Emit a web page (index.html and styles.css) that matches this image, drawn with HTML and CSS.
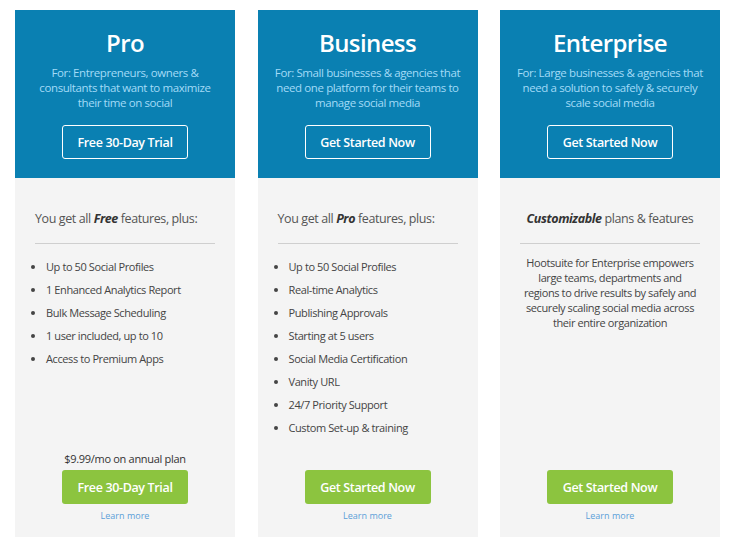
FILE: index.html
```html
<!DOCTYPE html>
<html lang="en">
<head>
<meta charset="utf-8">
<title>Plans</title>
<link rel="stylesheet" href="styles.css">
</head>
<body>
<div class="plans">
  <div class="plan">
    <div class="plan-head">
      <h2 class="plan-title">Pro</h2>
      <p class="plan-for">For: Entrepreneurs, owners &amp;<br>consultants that want to maximize<br>their time on social</p>
      <a class="btn btn-outline">Free 30-Day Trial</a>
    </div>
    <div class="plan-body">
      <p class="plan-intro">You get all <em>Free</em> features, plus:</p>
      <hr class="divider">
      <ul class="features">
        <li>Up to 50 Social Profiles</li>
        <li>1 Enhanced Analytics Report</li>
        <li>Bulk Message Scheduling</li>
        <li>1 user included, up to 10</li>
        <li>Access to Premium Apps</li>
      </ul>
      <div class="plan-foot">
        <p class="price">$9.99/mo on annual plan</p>
        <a class="btn btn-green">Free 30-Day Trial</a>
        <a class="learn">Learn more</a>
      </div>
    </div>
  </div>
  <div class="plan">
    <div class="plan-head">
      <h2 class="plan-title">Business</h2>
      <p class="plan-for">For: Small businesses &amp; agencies that<br>need one platform for their teams to<br>manage social media</p>
      <a class="btn btn-outline">Get Started Now</a>
    </div>
    <div class="plan-body">
      <p class="plan-intro">You get all <em>Pro</em> features, plus:</p>
      <hr class="divider">
      <ul class="features">
        <li>Up to 50 Social Profiles</li>
        <li>Real-time Analytics</li>
        <li>Publishing Approvals</li>
        <li>Starting at 5 users</li>
        <li>Social Media Certification</li>
        <li>Vanity URL</li>
        <li>24/7 Priority Support</li>
        <li>Custom Set-up &amp; training</li>
      </ul>
      <div class="plan-foot">
        <a class="btn btn-green">Get Started Now</a>
        <a class="learn">Learn more</a>
      </div>
    </div>
  </div>
  <div class="plan">
    <div class="plan-head">
      <h2 class="plan-title">Enterprise</h2>
      <p class="plan-for">For: Large businesses &amp; agencies that<br>need a solution to safely &amp; securely<br>scale social media</p>
      <a class="btn btn-outline">Get Started Now</a>
    </div>
    <div class="plan-body">
      <p class="plan-intro center"><em>Customizable</em> plans &amp; features</p>
      <hr class="divider">
      <p class="plan-desc">Hootsuite for Enterprise empowers<br>large teams, departments and<br>regions to drive results by safely and<br>securely scaling social media across<br>their entire organization</p>
      <div class="plan-foot">
        <a class="btn btn-green">Get Started Now</a>
        <a class="learn">Learn more</a>
      </div>
    </div>
  </div>
</div>
</body>
</html>
```

FILE: styles.css
```css
html, body {
  margin: 0;
  padding: 0;
  background: #ffffff;
}
body {
  font-family: "Open Sans", "Liberation Sans", sans-serif;
  color: #444;
  white-space: nowrap;
}
.plans {
  display: flex;
  gap: 22.5px;
  padding: 10px 15px;
  height: 527px;
}
.plan {
  width: 220px;
  display: flex;
  flex-direction: column;
}
.plan-head {
  background: #0a80b2;
  height: 168px;
  box-sizing: border-box;
  padding-top: 18px;
  display: flex;
  flex-direction: column;
  align-items: center;
  text-align: center;
}
.plan-title {
  margin: 0;
  color: #fff;
  font-size: 24px;
  line-height: 30px;
  font-weight: 600;
  letter-spacing: -0.6px;
}
.plan-for {
  margin: 6.5px 0 0;
  color: #a3dbf7;
  font-size: 11.5px;
  line-height: 15px;
  letter-spacing: -0.4px;
}
.btn {
  display: flex;
  align-items: center;
  justify-content: center;
  box-sizing: border-box;
  width: 126px;
  height: 34px;
  border-radius: 3px;
  color: #fff;
  font-size: 12.5px;
  font-weight: 600;
  letter-spacing: -0.35px;
  cursor: pointer;
}
.btn-outline {
  margin-top: 15.5px;
  border: 1px solid #fff;
}
.btn-green {
  background: #8cc43f;
}
.plan-body {
  flex: 1;
  background: #f4f4f4;
  padding: 32px 20px 14px;
  display: flex;
  flex-direction: column;
}
.plan-intro {
  margin: 0;
  font-size: 12.5px;
  line-height: 18px;
  color: #555;
  letter-spacing: -0.4px;
}
.plan-intro em {
  font-weight: 700;
  color: #333;
}
.center {
  text-align: center;
}
.divider {
  margin: 14.5px 0 0;
  border: 0;
  border-top: 1px solid #cfcfcf;
  height: 0;
}
.features {
  margin: 11.5px 0 0;
  padding: 0 0 0 11px;
  list-style: disc;
  font-size: 11px;
  line-height: 23px;
  color: #444;
  letter-spacing: -0.4px;
}
.plan-desc {
  margin: 11.5px 0 0;
  text-align: center;
  font-size: 11px;
  line-height: 15px;
  color: #444;
  letter-spacing: -0.4px;
}
.plan-foot {
  margin-top: auto;
  display: flex;
  flex-direction: column;
  align-items: center;
}
.price {
  margin: 0 0 4px;
  font-size: 11px;
  line-height: 14px;
  color: #333;
  letter-spacing: -0.3px;
}
.learn {
  margin-top: 5px;
  font-size: 9px;
  line-height: 14px;
  color: #5b9fd8;
  cursor: pointer;
}
```
